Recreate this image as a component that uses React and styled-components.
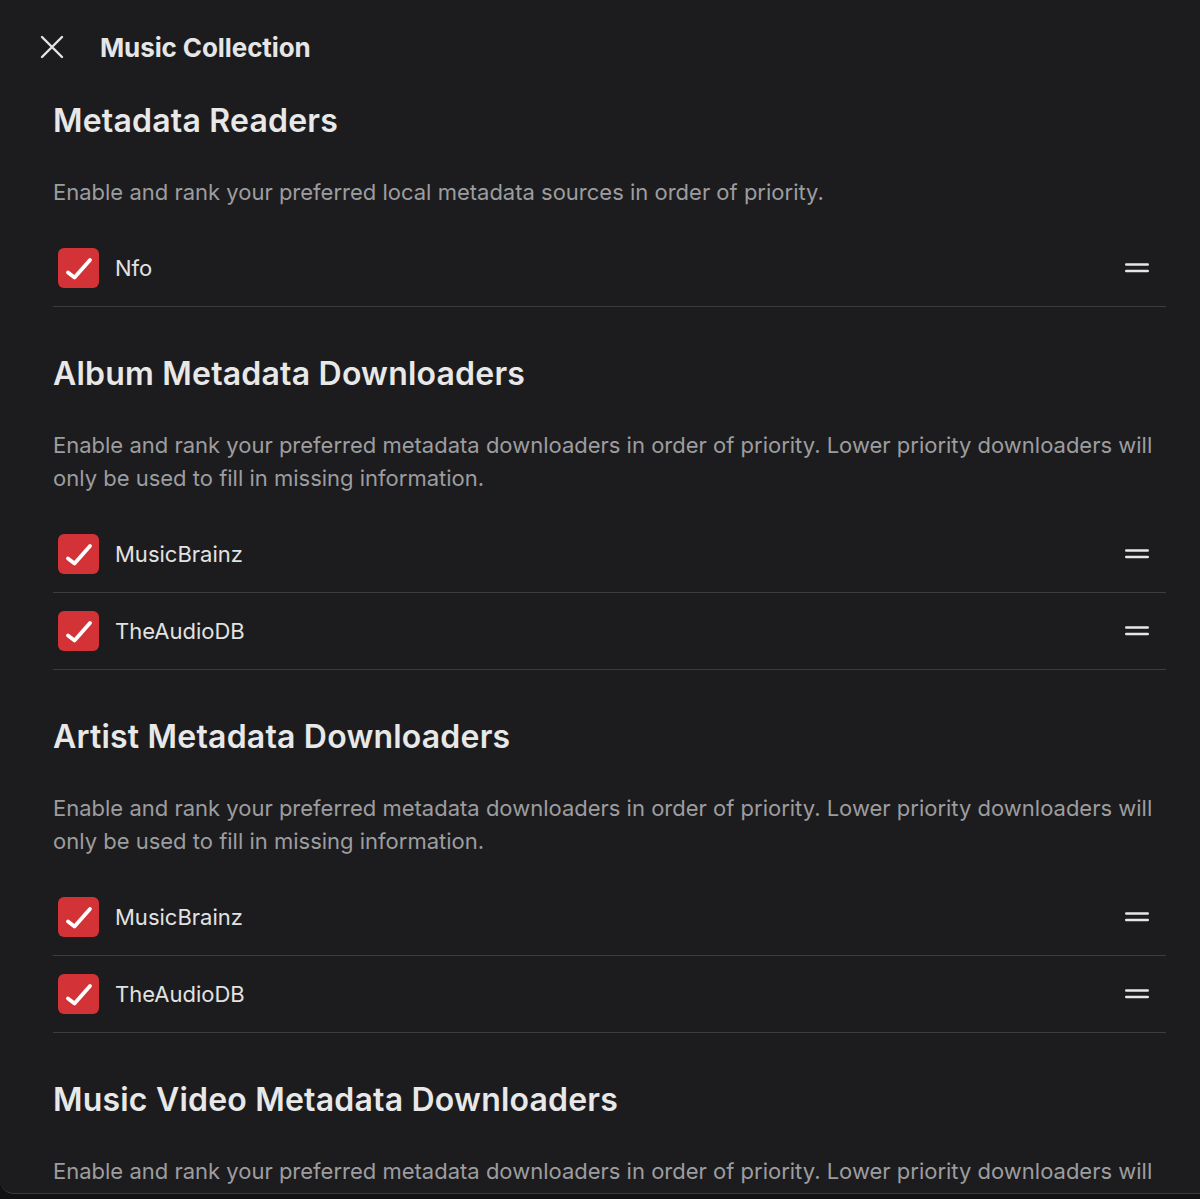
import React from "react";
import styled, { createGlobalStyle } from "styled-components";

const Global = createGlobalStyle`
  html, body { margin: 0; padding: 0; background: #111112; }
  body { font-family: Inter, "Noto Sans", "Liberation Sans", sans-serif; }
  * { box-sizing: border-box; }
`;

const Panel = styled.div`
  height: 1194px;
  width: 1200px;
  background: #1c1c1e;
  border-bottom: 1px solid #3a3a3c;
  border-bottom-left-radius: 14px;
  overflow: hidden;
  display: flex;
  flex-direction: column;
`;

const Header = styled.header`
  height: 95px;
  flex-shrink: 0;
  display: flex;
  align-items: center;
  gap: 36px;
  padding-left: 40px;
  padding-bottom: 1px;
`;

const CloseButton = styled.button`
  width: 24px;
  height: 24px;
  padding: 0;
  border: none;
  background: transparent;
  display: flex;
  align-items: center;
  justify-content: center;
  color: #e4e4e4;
  cursor: pointer;
`;

const Title = styled.h1`
  margin: 0;
  font-size: 26px;
  font-weight: 700;
  color: #e6e6e6;
  letter-spacing: -0.1px;
`;

const Content = styled.main`
  padding: 7px 34px 0 53px;
  display: flex;
  flex-direction: column;
  gap: 48px;
`;

const Section = styled.section`
  display: flex;
  flex-direction: column;
`;

const SectionTitle = styled.h2`
  margin: 0;
  font-size: 32px;
  line-height: 38px;
  font-weight: 600;
  color: #e8e8e8;
  letter-spacing: 0.2px;
`;

const Description = styled.p`
  margin: 36px 0 21px;
  font-size: 22px;
  line-height: 33px;
  color: #9d9d9f;
  font-weight: 400;
`;

const List = styled.ul`
  list-style: none;
  margin: 0;
  padding: 0;
`;

const Row = styled.li`
  height: 77px;
  display: flex;
  align-items: center;
  padding: 0 17px 0 5px;
  border-bottom: 1px solid #3c3c3e;
`;

const Check = styled.span`
  width: 41px;
  height: 40px;
  border-radius: 6px;
  background: ${(p) => (p.$checked ? "#d33236" : "transparent")};
  display: flex;
  align-items: center;
  justify-content: center;
  flex-shrink: 0;
`;

const Label = styled.span`
  margin-left: 16px;
  font-size: 22px;
  color: #e2e2e2;
  flex: 1;
`;

const Handle = styled.span`
  display: flex;
  width: 24px;
  height: 12px;
`;

const XIcon = () => (
  <svg width="24" height="24" viewBox="0 0 24 24" fill="none" stroke="currentColor" strokeWidth="2.4" strokeLinecap="round">
    <path d="M2 2 L22 22 M22 2 L2 22" />
  </svg>
);

const CheckIcon = () => (
  <svg width="41" height="40" viewBox="0 0 41 40" fill="none" stroke="#ffffff" strokeWidth="3.8" strokeLinecap="round" strokeLinejoin="round">
    <path d="M10 24.5 L16.5 29.5 L32 12" />
  </svg>
);

const HandleIcon = () => (
  <svg width="24" height="12" viewBox="0 0 24 12" fill="none" stroke="#e6e6e6" strokeWidth="2.6" strokeLinecap="round">
    <path d="M1.3 2.5 H22.7 M1.3 9 H22.7" />
  </svg>
);

const longDesc =
  "Enable and rank your preferred metadata downloaders in order of priority. Lower priority downloaders will only be used to fill in missing information.";

const sections = [
  {
    title: "Metadata Readers",
    desc: "Enable and rank your preferred local metadata sources in order of priority.",
    items: ["Nfo"],
  },
  { title: "Album Metadata Downloaders", desc: longDesc, items: ["MusicBrainz", "TheAudioDB"] },
  { title: "Artist Metadata Downloaders", desc: longDesc, items: ["MusicBrainz", "TheAudioDB"] },
  { title: "Music Video Metadata Downloaders", desc: longDesc, items: ["MusicBrainz", "TheAudioDB"] },
];

export default function App() {
  return (
    <>
      <Global />
      <Panel>
        <Header>
          <CloseButton aria-label="Close">
            <XIcon />
          </CloseButton>
          <Title>Music Collection</Title>
        </Header>
        <Content>
          {sections.map((s, i) => (
            <Section key={i}>
              <SectionTitle>{s.title}</SectionTitle>
              <Description>{s.desc}</Description>
              <List>
                {s.items.map((it) => (
                  <Row key={it}>
                    <Check $checked>
                      <CheckIcon />
                    </Check>
                    <Label>{it}</Label>
                    <Handle>
                      <HandleIcon />
                    </Handle>
                  </Row>
                ))}
              </List>
            </Section>
          ))}
        </Content>
      </Panel>
    </>
  );
}
